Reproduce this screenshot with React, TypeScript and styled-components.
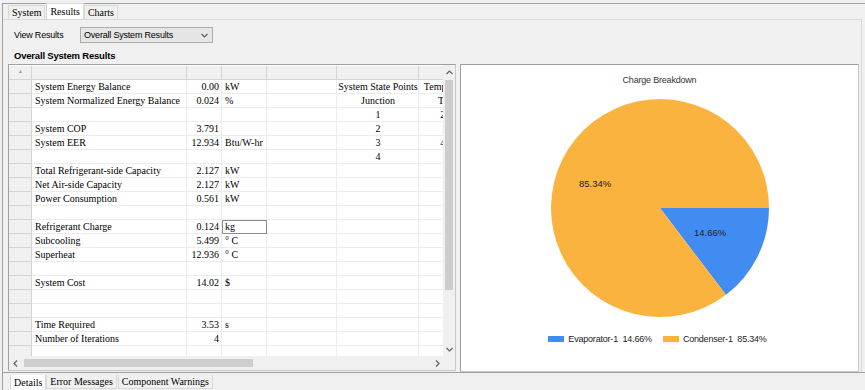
import { createGlobalStyle } from "styled-components";
import styled from "styled-components";

const GlobalStyle = createGlobalStyle`
    html, body {
        margin: 0;
        padding: 0;
        background: #f0f0f0;
    }
    body {
        font-family: "Liberation Sans", Arial, sans-serif;
    }
`;

const gridFont = `"Liberation Serif", "Noto Sans CJK SC", serif`;

const Window = styled.div`
    width: 865px;
    height: 390px;
    box-sizing: border-box;
    overflow: hidden;
    background: #f0f0f0;
    padding-top: 3px;
    padding-left: 2px;
    display: flex;
    flex-direction: column;
`;

const Frame = styled.div`
    border-top: 1px solid #a0a0a0;
    border-left: 1px solid #a0a0a0;
    flex: 1;
    display: flex;
    flex-direction: column;
    min-height: 0;
`;

const TabStrip = styled.div<{ $bottom?: boolean }>`
    display: flex;
    align-items: ${p => (p.$bottom ? "flex-start" : "flex-end")};
    height: 15px;
    padding-left: ${p => (p.$bottom ? "7px" : "5px")};
`;

const Tab = styled.div<{ $active?: boolean; $bottom?: boolean }>`
    font-family: ${gridFont};
    font-size: 10px;
    color: #000;
    padding: 0 3px;
    height: ${p => (p.$active ? "16px" : "14px")};
    line-height: ${p => (p.$active ? "16px" : "14px")};
    background: ${p => (p.$active ? "#fff" : "#f0f0f0")};
    border: 1px solid #d9d9d9;
    ${p => (p.$bottom ? "border-top: none;" : "border-bottom: none;")}
    margin-right: ${p => (p.$active ? "0" : "1px")};
    box-sizing: border-box;
    white-space: nowrap;
`;

const Page = styled.div`
    flex: 1;
    display: flex;
    flex-direction: column;
    border-top: 1px solid #d9d9d9;
    border-right: 1px solid #d9d9d9;
    margin-right: 3px;
    padding: 7px 0 0 5px;
    min-height: 0;
`;

const Toolbar = styled.div`
    display: flex;
    align-items: center;
    height: 16px;
    padding-left: 6px;
`;

const Label = styled.span`
    font-family: "Liberation Sans", Arial, sans-serif;
    font-size: 9px;
    letter-spacing: -0.2px;
    color: #000;
    width: 66px;
`;

const Select = styled.div`
    width: 133px;
    height: 16px;
    box-sizing: border-box;
    border: 1px solid #adadad;
    background: #e5e5e5;
    display: flex;
    align-items: center;
    justify-content: space-between;
    padding: 0 4px 0 3px;
    font-family: "Liberation Sans", Arial, sans-serif;
    font-size: 9px;
    letter-spacing: -0.2px;
`;

const SectionTitle = styled.div`
    font-family: "Liberation Sans", Arial, sans-serif;
    font-weight: bold;
    font-size: 9.5px;
    letter-spacing: -0.2px;
    padding: 6px 0 0 6px;
    height: 15px;
    line-height: 14px;
`;

const Body = styled.div`
    display: flex;
    gap: 4px;
    height: 308px;
`;

const GridBox = styled.div`
    width: 448px;
    height: 307px;
    box-sizing: border-box;
    border: 1px solid #a0a0a0;
    border-right-color: #c8c8c8;
    border-bottom-color: #c8c8c8;
    background: #fff;
    display: grid;
    grid-template-columns: 434px 12px;
    grid-template-rows: 291px 14px;
`;

const Cells = styled.div`
    overflow: hidden;
    background: #fff;
`;

const Row = styled.div<{ $header?: boolean }>`
    display: flex;
    height: 14px;
    width: 500px;
    background: ${p => (p.$header ? "#f0f0f0" : "#fff")};
    ${p => p.$header && "margin-top: 1px;"}
`;

const Cell = styled.div<{ $w: number; $align?: string; $head?: boolean; $focus?: boolean }>`
    width: ${p => p.$w}px;
    flex: none;
    box-sizing: border-box;
    height: 14px;
    line-height: 14px;
    font-family: ${gridFont};
    font-size: 10px;
    color: #000;
    white-space: nowrap;
    overflow: hidden;
    display: flex;
    justify-content: ${p => (p.$align === "right" ? "flex-end" : p.$align === "center" ? "center" : "flex-start")};
    padding: 0 2px 0 3px;
    border-right: 1px solid ${p => (p.$head ? "#d4d4d4" : "#ececec")};
    border-bottom: 1px solid ${p => (p.$head ? "#d4d4d4" : "#ececec")};
    background: ${p => (p.$head ? "#f0f0f0" : "transparent")};
    ${p => p.$focus && "outline: 1px solid #8c8c8c; outline-offset: -1px;"}
`;

const SortMark = styled.span`
    font-size: 5px;
    color: #9a9a9a;
    margin: 0 auto;
    line-height: 12px;
`;

const VScroll = styled.div`
    background: #f0f0f0;
    display: flex;
    flex-direction: column;
    align-items: center;
`;

const HScroll = styled.div`
    background: #f0f0f0;
    display: flex;
    align-items: center;
`;

const Corner = styled.div`
    background: #f0f0f0;
`;

const Arrow = styled.div`
    width: 12px;
    height: 14px;
    flex: none;
    display: flex;
    align-items: center;
    justify-content: center;
`;

const VThumb = styled.div`
    width: 8px;
    height: 210px;
    background: #cdcdcd;
    margin-top: 1px;
`;

const HThumb = styled.div`
    height: 8px;
    width: 229px;
    background: #cdcdcd;
    margin-left: 3px;
`;

const Spacer = styled.div`
    flex: 1;
`;

const ChartBox = styled.div`
    width: 399px;
    height: 308px;
    box-sizing: border-box;
    border: 1px solid #a0a0a0;
    border-right-color: #c8c8c8;
    border-bottom-color: #c8c8c8;
    background: #fff;
    display: flex;
    flex-direction: column;
    align-items: center;
    padding-top: 8px;
`;

const ChartTitle = styled.div`
    font-family: "Liberation Sans", Arial, sans-serif;
    font-size: 9px;
    color: #333;
    letter-spacing: -0.2px;
    height: 14px;
    line-height: 14px;
    margin-bottom: 12px;
`;

const Legend = styled.div`
    display: flex;
    align-items: center;
    gap: 11px;
    margin-top: 17px;
    font-family: "Liberation Sans", Arial, sans-serif;
    font-size: 9px;
    letter-spacing: -0.2px;
    color: #222;
    margin-right: 4px;
`;

const LegendItem = styled.div`
    display: flex;
    align-items: center;
    gap: 4px;
`;

const Swatch = styled.span<{ $color: string }>`
    width: 16px;
    height: 6px;
    background: ${p => p.$color};
`;

const BottomBar = styled.div`
    border-top: 1px solid #a0a0a0;
    height: 15px;
    padding-top: 2px;
`;

const ORANGE = "#fbb33f";
const BLUE = "#418cf0";

type RowData = [string, string, string, string?, string?];

const rows: RowData[] = [
    ["System Energy Balance", "0.00", "kW", "System State Points", "Temperature"],
    ["System Normalized Energy Balance", "0.024", "%", "Junction", "T (C)"],
    ["", "", "", "1", "25.3"],
    ["System COP", "3.791", "", "2", "8.1"],
    ["System EER", "12.934", "Btu/W-hr", "3", "45.2"],
    ["", "", "", "4", ""],
    ["Total Refrigerant-side Capacity", "2.127", "kW"],
    ["Net Air-side Capacity", "2.127", "kW"],
    ["Power Consumption", "0.561", "kW"],
    ["", "", ""],
    ["Refrigerant Charge", "0.124", "kg"],
    ["Subcooling", "5.499", "° C"],
    ["Superheat", "12.936", "° C"],
    ["", "", ""],
    ["System Cost", "14.02", "$"],
    ["", "", ""],
    ["", "", ""],
    ["Time Required", "3.53", "s"],
    ["Number of Iterations", "4", ""],
    ["", "", ""],
    ["", "", ""],
];

const widths = [23, 155, 35, 45, 70, 82, 60];

const Pie = () => {
    const r = 109;
    const c = 109;
    const a = 0.1466 * Math.PI * 2;
    const x2 = c + r * Math.cos(a);
    const y2 = c + r * Math.sin(a);
    return (
        <svg width="218" height="218" viewBox="0 0 218 218">
            <path d={`M${c} ${c} L${c + r} ${c} A${r} ${r} 0 0 1 ${x2} ${y2} Z`} fill={BLUE} />
            <path d={`M${c} ${c} L${x2} ${y2} A${r} ${r} 0 1 1 ${c + r} ${c} Z`} fill={ORANGE} />
            <text x="28" y="88" fontFamily="Liberation Sans, Arial, sans-serif" fontSize="9.5" fill="#222">85.34%</text>
            <text x="143" y="137" fontFamily="Liberation Sans, Arial, sans-serif" fontSize="9.5" fill="#222">14.66%</text>
        </svg>
    );
};

const ChevronUp = () => (
    <svg width="7" height="5" viewBox="0 0 7 5"><path d="M0.5 4 L3.5 1 L6.5 4" stroke="#606060" fill="none" strokeWidth="1.2" /></svg>
);
const ChevronDown = () => (
    <svg width="7" height="5" viewBox="0 0 7 5"><path d="M0.5 1 L3.5 4 L6.5 1" stroke="#606060" fill="none" strokeWidth="1.2" /></svg>
);
const ChevronLeft = () => (
    <svg width="5" height="7" viewBox="0 0 5 7"><path d="M4 0.5 L1 3.5 L4 6.5" stroke="#606060" fill="none" strokeWidth="1.2" /></svg>
);
const ChevronRight = () => (
    <svg width="5" height="7" viewBox="0 0 5 7"><path d="M1 0.5 L4 3.5 L1 6.5" stroke="#606060" fill="none" strokeWidth="1.2" /></svg>
);

export default function App() {
    return (
        <>
            <GlobalStyle />
            <Window>
                <Frame>
                    <TabStrip>
                        <Tab>System</Tab>
                        <Tab $active>Results</Tab>
                        <Tab>Charts</Tab>
                    </TabStrip>
                    <Page>
                        <Toolbar>
                            <Label>View Results</Label>
                            <Select>
                                <span>Overall System Results</span>
                                <ChevronDown />
                            </Select>
                        </Toolbar>
                        <SectionTitle>Overall System Results</SectionTitle>
                        <Body>
                            <GridBox>
                                <Cells>
                                    <Row $header>
                                        <Cell $w={widths[0]} $head><SortMark>▲</SortMark></Cell>
                                        {widths.slice(1).map((w, i) => (
                                            <Cell key={i} $w={w} $head />
                                        ))}
                                    </Row>
                                    {rows.map((r, i) => (
                                        <Row key={i}>
                                            <Cell $w={widths[0]} $head />
                                            <Cell $w={widths[1]}>{r[0]}</Cell>
                                            <Cell $w={widths[2]} $align="right">{r[1]}</Cell>
                                            <Cell $w={widths[3]} $focus={r[0] === "Refrigerant Charge"}>{r[2]}</Cell>
                                            <Cell $w={widths[4]} />
                                            <Cell $w={widths[5]} $align="center">{r[3] ?? ""}</Cell>
                                            <Cell $w={widths[6]} $align="center">{r[4] ?? ""}</Cell>
                                        </Row>
                                    ))}
                                </Cells>
                                <VScroll>
                                    <Arrow><ChevronUp /></Arrow>
                                    <VThumb />
                                    <Spacer />
                                    <Arrow><ChevronDown /></Arrow>
                                </VScroll>
                                <HScroll>
                                    <Arrow><ChevronLeft /></Arrow>
                                    <HThumb />
                                    <Spacer />
                                    <Arrow><ChevronRight /></Arrow>
                                </HScroll>
                                <Corner />
                            </GridBox>
                            <ChartBox>
                                <ChartTitle>Charge Breakdown</ChartTitle>
                                <Pie />
                                <Legend>
                                    <LegendItem><Swatch $color={BLUE} />Evaporator-1&nbsp; 14.66%</LegendItem>
                                    <LegendItem><Swatch $color={ORANGE} />Condenser-1&nbsp; 85.34%</LegendItem>
                                </Legend>
                            </ChartBox>
                        </Body>
                    </Page>
                    <BottomBar>
                        <TabStrip $bottom>
                            <Tab $active $bottom>Details</Tab>
                            <Tab $bottom>Error Messages</Tab>
                            <Tab $bottom>Component Warnings</Tab>
                        </TabStrip>
                    </BottomBar>
                </Frame>
            </Window>
        </>
    );
}
